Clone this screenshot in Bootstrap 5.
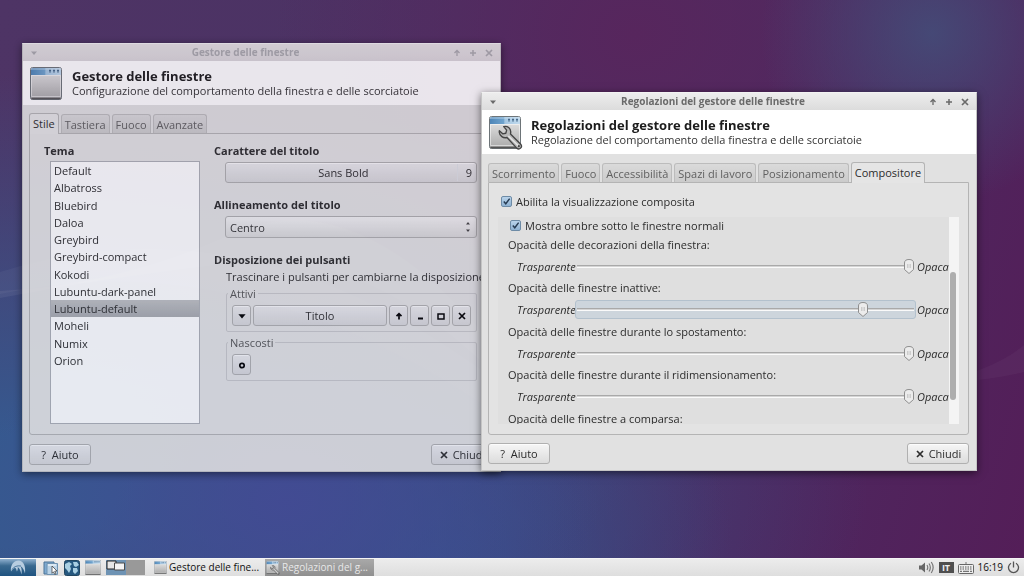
<!DOCTYPE html>
<html lang="it">
<head>
<meta charset="utf-8">
<meta name="viewport" content="width=device-width, initial-scale=1">
<title>Gestore delle finestre</title>
<link href="https://cdn.jsdelivr.net/npm/bootstrap@5.3.0/dist/css/bootstrap.min.css" rel="stylesheet">
<style>
  body { font-family: "Open Sans", "Noto Sans", sans-serif; font-size: 11px; line-height: 17px; color: #2c2c2c; }
  svg { display: block; flex: none; }

  /* Desktop */
  .desktop {
    background:
      radial-gradient(circle at 91% 6%, rgba(68,76,120,.9), rgba(68,76,120,0) 16%),
      radial-gradient(ellipse at 28% 90%, rgba(67,74,148,.9), rgba(67,74,148,0) 30%),
      radial-gradient(ellipse at 0% 88%, #36598f 8%, rgba(54,89,143,0) 60%),
      radial-gradient(ellipse at 62% 6%, #57265d, rgba(87,38,93,0) 40%),
      radial-gradient(ellipse at 42% 100%, rgba(56,70,132,.95), rgba(56,70,132,0) 36%),
      linear-gradient(105deg, #4e3465 0%, #4b3264 40%, #4d2860 75%, #541e58 100%);
  }
  .ray { position: absolute; inset: 0; width: 100%; height: 100%; }

  /* Windows */
  .win { position: absolute; background: #e1e1e1; border: 1px solid #c4c4c4; border-top-color: #f2f2f2; box-shadow: 0 2px 8px rgba(0,0,0,.55); }
  .win-manager { left: 22px; top: 43px; width: 479px; opacity: .88; }
  .win-tweaks { left: 481px; top: 92px; width: 496px; }
  .win-title { height: 17px; padding: 0 6px; background: linear-gradient(#ededed, #dcdcdc); color: #6a6a6a; font-size: 10px; font-weight: 700; }
  .win-manager .win-title { color: #a9a9ad; background: linear-gradient(#e4e1e2, #dad7da); }
  .win-title button { border: 0; background: none; color: inherit; padding: 0; width: 10px; height: 10px; }
  .win-title .controls { gap: 6px; }
  .win-banner { height: 44px; background: #fff; padding: 0 6px; color: #333; }
  .win-banner h1 { font-size: 13px; line-height: 15px; font-weight: 700; margin: 0; color: #1c1c1c; }
  .win-banner p { line-height: 14px; margin: 0; }
  .win-body { padding: 8px 7px 6px 6px; }

  .win .nav-tabs { border: 0; gap: 2px; height: 20px; padding-right: 1px; }
  .win .nav-link { font-size: 11px; line-height: 17px; padding: 1px 3px; color: #606060; border: 1px solid #bcbcbc; border-bottom: 0; border-radius: 3px 3px 0 0; background: linear-gradient(#dadada, #cbcbcb); margin: 0; height: 19px; }
  .win .nav-link.active { background: #e5e5e5; color: #2c2c2c; height: 21px; margin-bottom: -1px; border-color: #b4b4b4; position: relative; z-index: 1; }
  .win-page { background: #e3e3e3; border: 1px solid #b4b4b4; border-radius: 0 0 3px 3px; }

  .caption { font-size: 11px; line-height: 17px; font-weight: 700; margin: 0; }
  .gtk-btn { font-size: 11px; line-height: 17px; color: #2c2c2c; background: linear-gradient(#f6f6f6, #dcdcdc); border: 1px solid #b0b0b0; border-radius: 3px; padding: 0 4px; height: 21px; box-shadow: inset 0 1px 0 rgba(255,255,255,.7); }
  .gtk-btn:hover { background: #eee; border-color: #999; color: #333; }
  .dlg-btn { width: 62px; }
  .sq-btn { width: 19px; height: 21px; padding: 0; color: #000; }
  .win-manager .gtk-btn { background: linear-gradient(#eaeaec, #d8d8da); }

  .manager-page { padding: 8px 15px 10px 14px; gap: 14px; }
  .theme-col { width: 156px; }
  .theme-list { height: 263px; margin: 2px 0 0 6px; background: #fff; border: 1px solid #aeb0b6; border-radius: 0; }
  .theme-list ul { display: grid; grid-auto-rows: 1fr; height: 207px; margin: 0; padding: 0; list-style: none; }
  .theme-list li { padding: 0 3px; line-height: 17px; }
  .theme-list li[aria-selected=true] { background: linear-gradient(#bfc0c2, #a9abaf); }
  .options { min-width: 0; }
  .indent { padding: 3px 0 13px 11px; }
  .gtk-select { appearance: none; font-size: 11px; line-height: 17px; height: 22px; padding: 0 4px; color: #333; border: 1px solid #b0b0b0; border-radius: 3px;
    background: url("data:image/svg+xml,%3Csvg xmlns='http://www.w3.org/2000/svg' width='6' height='12'%3E%3Cpath d='M1 3.500L3 1l2 2.500zM1 8.500L3 11l2-2.500z' fill='%23444'/%3E%3C/svg%3E") right 5px center no-repeat, linear-gradient(#f2f2f2, #dadada); }
  .frame { border: 1px solid #c8c8ca; border-radius: 2px; padding: 3px 5px 5px 5px; margin: 0 0 2px; }
  .frame legend { float: none; width: auto; font-size: 11px; line-height: 17px; padding: 0 2px; margin: 0 0 0 -4px; color: #555; }

  /* Compositor page */
  .tweaks-page { padding: 8px 9px 10px; }
  .check-row { height: 20px; margin-bottom: 6px; padding-left: 3px; }
  .scroll-pane .check-row { height: 16px; margin-bottom: 2px; padding-left: 2px; }
  .gtk-check { appearance: none; width: 11px; height: 11px; margin: 0; border: 1px solid #6d8ba6; border-radius: 2px; flex: none;
    background: url("data:image/svg+xml,%3Csvg xmlns='http://www.w3.org/2000/svg' viewBox='0 0 10 10'%3E%3Cpath d='M2 5l2.200 2.500L8.500 1.800' fill='none' stroke='%23263b52' stroke-width='1.600'/%3E%3C/svg%3E") center/9px no-repeat, linear-gradient(#b9d3ea, #8fb2d3); }
  .scroll-pane { height: 207px; background: #dfdfdf; overflow: hidden; padding-left: 10px; }
  .sliders { display: grid; grid-auto-rows: 1fr; height: 217px; }
  .sliders .name { line-height: 20px; display: block; }
  .slider-row { height: 23px; }
  .slider-row i { flex: none; width: 67px; padding-left: 9px; }
  .slider-row i.end { width: 33px; padding-left: 1px; }
  .gtk-range { appearance: none; flex: 1 1 0; min-width: 0; height: 19px; margin: 0; padding: 0 1px; border: 1px solid transparent; border-radius: 3px; background: none; }
  .gtk-range.focused { background: #cdd5dc; border-color: #b3c1cd; }
  .gtk-range::-webkit-slider-runnable-track { height: 3px; border-top: 1px solid #a9a9a9; border-bottom: 1px solid #fafafa; background: #d4d4d4; }
  .gtk-range::-webkit-slider-thumb { appearance: none; width: 10px; height: 15px; margin-top: -7px; border: 0;
    background: url("data:image/svg+xml,%3Csvg xmlns='http://www.w3.org/2000/svg' width='10' height='15'%3E%3Cpath d='M.5 4Q.5.5 5 .5T9.500 4v6.500L5 14.500.5 10.500z' fill='%23ececec' stroke='%238e8e8e'/%3E%3Cpath d='M3.500 5v4M5 5v4M6.500 5v4' stroke='%23c4c4c4' stroke-width='.8'/%3E%3C/svg%3E") no-repeat; }
  .scroll-track { width: 10px; background: #f4f4f4; padding: 55px 3px 24px 1px; }
  .scroll-thumb { flex: 1; background: #aeaeae; border-radius: 3px; }

  .dlg-foot { margin-top: 9px; }
  .win-tweaks .dlg-foot { margin-top: 8px; }

  /* Panel */
  .panel { background: linear-gradient(#ececec, #dedede); height: 18px; border-top: 1px solid #f4f4f4; }
  .panel button { border: 0; background: none; padding: 0; font-size: 10px; line-height: 17px; color: #111; }
  .panel .start { width: 36px; margin-right: 7px; background: linear-gradient(#8fb0cf, #39698f 40%, #1f5380); }
  .panel .launch { margin-right: 5px; }
  .panel .pager { margin-right: 8px; }
  .panel .task { width: 109px; padding-left: 1px; gap: 2px; margin-right: 3px; white-space: nowrap; font-weight: 500; }
  .panel .task.active { background: linear-gradient(#a9a9a9, #8f8f8f); color: #e8e8e8; }
  .tray { gap: 4px; padding-right: 4px; color: #555; }
  .tray .lang { background: #4f4f4f; color: #eee; font-size: 9px; line-height: 11px; font-weight: 700; width: 15px; }
  .tray time { color: #111; font-weight: 500; font-size: 10px; }
</style>
</head>
<body class="vh-100 d-flex flex-column overflow-hidden">

<svg width="0" height="0" class="position-absolute" aria-hidden="true">
  <defs>
    <linearGradient id="gBody" x2="0" y2="1"><stop offset="0" stop-color="#ececec"/><stop offset="1" stop-color="#a8a8a8"/></linearGradient>
    <linearGradient id="gBar"><stop offset="0" stop-color="#4e86b8"/><stop offset=".45" stop-color="#6fa3cd"/><stop offset=".5" stop-color="#a3c6e2"/><stop offset="1" stop-color="#c2dbee"/></linearGradient>
    <symbol id="window" viewBox="0 0 32 33">
      <rect x=".5" y=".5" width="31" height="32" rx="2" fill="url(#gBody)" stroke="#6d7478"/>
      <path d="M1 8V2.500Q1 1 2.500 1h27Q31 1 31 2.500V8z" fill="url(#gBar)"/>
      <path d="M1 2h30" stroke="#d4e6f4" opacity=".7"/>
      <path d="M19 3.500h2M23 3.500h2M27 3.500h2M19.500 5h1M23.500 5h1M27.500 5h1" stroke="#47698a" stroke-width="1.500"/>
      <path d="M1.500 31.500h29" stroke="#555" stroke-width="1.600"/>
      <path d="M1.500 8.500h29v21h-29z" fill="none" stroke="#fff" opacity=".5"/>
    </symbol>
    <symbol id="wrench" viewBox="0 0 24 24">
      <path d="M5.500 1.500C9 .5 12.500 3 12.200 7l-.2 1.600 9.800 9.900c1 1.200.9 2.700-.1 3.700s-2.600 1-3.700 0L8.600 12C5 13 1.500 10.500 1.200 7l.1-1.500L4.500 8.500l3-.6.8-3z" fill="#b9b9b9" stroke="#444" stroke-width="1.300" stroke-linejoin="round"/>
      <path d="M10 10.500l9.500 9.500" stroke="#e6e6e6" stroke-width="1.300"/>
      <circle cx="20" cy="20.300" r="1" fill="#444"/>
    </symbol>
    <symbol id="menuMark" viewBox="0 0 10 10"><path d="M2 3.500h6L5 7z" fill="currentColor"/></symbol>
    <symbol id="up" viewBox="0 0 10 10"><path d="M5 8V3M2.500 5L5 2.500 7.500 5" fill="none" stroke="currentColor" stroke-width="1.300"/></symbol>
    <symbol id="plus" viewBox="0 0 10 10"><path d="M5 2v6M2 5h6" stroke="currentColor" stroke-width="1.500"/></symbol>
    <symbol id="cross" viewBox="0 0 10 10"><path d="M2 2l6 6M8 2L2 8" stroke="currentColor" stroke-width="1.700"/></symbol>
  </defs>
</svg>

<main class="desktop flex-grow-1 position-relative overflow-hidden">
  <svg class="ray" viewBox="0 0 1024 558" preserveAspectRatio="none" aria-hidden="true">
    <path d="M0 291Q120 285 230 235 350 180 480 330L480 360Q360 250 240 262 120 275 0 298z" fill="#fff" opacity=".06"/>
    <path d="M0 272Q260 190 520 400L520 430Q260 240 0 294z" fill="#fff" opacity=".04"/>
    <path d="M960 382Q1000 378 1024 372V345Q1000 365 960 376z" fill="#fff" opacity=".03"/>
  </svg>

  <section class="win win-manager" aria-labelledby="t1">
    <header class="win-title d-flex align-items-center">
      <button type="button" aria-label="Menu"><svg width="10" height="10"><use href="#menuMark"/></svg></button>
      <div id="t1" class="flex-grow-1 text-center">Gestore delle finestre</div>
      <div class="controls d-flex">
        <button type="button" aria-label="Arrotola"><svg width="10" height="10"><use href="#up"/></svg></button>
        <button type="button" aria-label="Massimizza"><svg width="10" height="10"><use href="#plus"/></svg></button>
        <button type="button" aria-label="Chiudi finestra"><svg width="10" height="10"><use href="#cross"/></svg></button>
      </div>
    </header>
    <div class="win-banner d-flex align-items-center">
      <svg width="35" height="35" class="me-2"><use href="#window" x="1" y="1" width="32" height="33"/></svg>
      <div><h1>Gestore delle finestre</h1><p>Configurazione del comportamento della finestra e delle scorciatoie</p></div>
    </div>
    <div class="win-body">
      <ul class="nav nav-tabs flex-nowrap align-items-end">
        <li class="nav-item"><a class="nav-link active" href="#stile">Stile</a></li>
        <li class="nav-item"><a class="nav-link" href="#tastiera">Tastiera</a></li>
        <li class="nav-item"><a class="nav-link" href="#fuoco">Fuoco</a></li>
        <li class="nav-item"><a class="nav-link" href="#avanzate">Avanzate</a></li>
      </ul>
      <div class="win-page manager-page d-flex">
        <div class="theme-col flex-shrink-0">
          <h2 class="caption" id="tema">Tema</h2>
          <div class="theme-list">
            <ul role="listbox" aria-labelledby="tema">
              <li role="option">Default</li>
              <li role="option">Albatross</li>
              <li role="option">Bluebird</li>
              <li role="option">Daloa</li>
              <li role="option">Greybird</li>
              <li role="option">Greybird-compact</li>
              <li role="option">Kokodi</li>
              <li role="option">Lubuntu-dark-panel</li>
              <li role="option" aria-selected="true">Lubuntu-default</li>
              <li role="option">Moheli</li>
              <li role="option">Numix</li>
              <li role="option">Orion</li>
            </ul>
          </div>
        </div>
        <div class="options flex-grow-1">
          <h2 class="caption">Carattere del titolo</h2>
          <div class="indent">
            <button type="button" class="btn gtk-btn w-100 d-flex align-items-center">
              <span class="flex-grow-1">Sans Bold</span><span class="border-start ps-2">9</span>
            </button>
          </div>
          <label class="caption d-block" for="align">Allineamento del titolo</label>
          <div class="indent">
            <select id="align" class="gtk-select w-100 d-block"><option>Centro</option></select>
          </div>
          <h2 class="caption">Disposizione dei pulsanti</h2>
          <div class="ps-2 ms-1">
            <p class="m-0 text-nowrap">Trascinare i pulsanti per cambiarne la disposizione</p>
            <fieldset class="frame">
              <legend>Attivi</legend>
              <div class="d-flex" style="gap: 2px">
                <button type="button" class="btn gtk-btn sq-btn" aria-label="Menu"><svg class="m-auto" width="12" height="12"><use href="#menuMark"/></svg></button>
                <button type="button" class="btn gtk-btn flex-grow-1">Titolo</button>
                <button type="button" class="btn gtk-btn sq-btn" aria-label="Arrotola"><svg class="m-auto" width="10" height="10" viewBox="0 0 10 10"><path d="M5 8.500V3M2.500 5.200L5 2.700 7.500 5.200" fill="none" stroke="currentColor" stroke-width="1.700"/></svg></button>
                <button type="button" class="btn gtk-btn sq-btn" aria-label="Minimizza"><svg class="m-auto" width="10" height="10"><path d="M3 7.500h5" stroke="currentColor" stroke-width="2"/></svg></button>
                <button type="button" class="btn gtk-btn sq-btn" aria-label="Massimizza"><svg class="m-auto" width="10" height="10"><path d="M2 3h6v5H2z" fill="none" stroke="currentColor" stroke-width="1.500"/></svg></button>
                <button type="button" class="btn gtk-btn sq-btn" aria-label="Chiudi"><svg class="m-auto" width="10" height="10"><use href="#cross"/></svg></button>
              </div>
            </fieldset>
            <fieldset class="frame">
              <legend>Nascosti</legend>
              <button type="button" class="btn gtk-btn sq-btn d-block" aria-label="Appiccica"><svg class="m-auto" width="10" height="10"><circle cx="5" cy="5.500" r="2.200" fill="none" stroke="currentColor" stroke-width="1.700"/></svg></button>
            </fieldset>
          </div>
        </div>
      </div>
      <div class="dlg-foot d-flex justify-content-between">
        <button type="button" class="btn gtk-btn dlg-btn">? &nbsp;Aiuto</button>
        <button type="button" class="btn gtk-btn dlg-btn d-flex align-items-center justify-content-center gap-1"><svg width="10" height="10"><use href="#cross"/></svg>Chiudi</button>
      </div>
    </div>
  </section>

  <section class="win win-tweaks" aria-labelledby="t2">
    <header class="win-title d-flex align-items-center">
      <button type="button" aria-label="Menu"><svg width="10" height="10"><use href="#menuMark"/></svg></button>
      <div id="t2" class="flex-grow-1 text-center">Regolazioni del gestore delle finestre</div>
      <div class="controls d-flex">
        <button type="button" aria-label="Arrotola"><svg width="10" height="10"><use href="#up"/></svg></button>
        <button type="button" aria-label="Massimizza"><svg width="10" height="10"><use href="#plus"/></svg></button>
        <button type="button" aria-label="Chiudi finestra"><svg width="10" height="10"><use href="#cross"/></svg></button>
      </div>
    </header>
    <div class="win-banner d-flex align-items-center">
      <svg width="35" height="35" class="me-2"><use href="#window" x="1" y="1" width="32" height="33"/><use href="#wrench" x="10" y="10" width="25" height="25"/></svg>
      <div><h1>Regolazioni del gestore delle finestre</h1><p>Regolazione del comportamento della finestra e delle scorciatoie</p></div>
    </div>
    <div class="win-body">
      <ul class="nav nav-tabs flex-nowrap align-items-end">
        <li class="nav-item"><a class="nav-link" href="#scorrimento">Scorrimento</a></li>
        <li class="nav-item"><a class="nav-link" href="#fuoco2">Fuoco</a></li>
        <li class="nav-item"><a class="nav-link" href="#accessibilita">Accessibilità</a></li>
        <li class="nav-item"><a class="nav-link text-nowrap" href="#spazi">Spazi di lavoro</a></li>
        <li class="nav-item"><a class="nav-link" href="#posizionamento">Posizionamento</a></li>
        <li class="nav-item"><a class="nav-link active" href="#compositore">Compositore</a></li>
      </ul>
      <div class="win-page tweaks-page">
        <label class="check-row d-flex align-items-center gap-1"><input type="checkbox" class="gtk-check" checked>Abilita la visualizzazione composita</label>
        <div class="d-flex">
          <div class="scroll-pane flex-grow-1">
            <label class="check-row d-flex align-items-center gap-1"><input type="checkbox" class="gtk-check" checked>Mostra ombre sotto le finestre normali</label>
            <div class="sliders">
              <div><label class="name" for="r1">Opacità delle decorazioni della finestra:</label>
                <div class="slider-row d-flex align-items-center"><i>Trasparente</i><input id="r1" class="gtk-range" type="range" value="100"><i class="end">Opaca</i></div></div>
              <div><label class="name" for="r2">Opacità delle finestre inattive:</label>
                <div class="slider-row d-flex align-items-center"><i>Trasparente</i><input id="r2" class="gtk-range focused" type="range" value="86"><i class="end">Opaca</i></div></div>
              <div><label class="name" for="r3">Opacità delle finestre durante lo spostamento:</label>
                <div class="slider-row d-flex align-items-center"><i>Trasparente</i><input id="r3" class="gtk-range" type="range" value="100"><i class="end">Opaca</i></div></div>
              <div><label class="name" for="r4">Opacità delle finestre durante il ridimensionamento:</label>
                <div class="slider-row d-flex align-items-center"><i>Trasparente</i><input id="r4" class="gtk-range" type="range" value="100"><i class="end">Opaca</i></div></div>
              <div><span class="name">Opacità delle finestre a comparsa:</span></div>
            </div>
          </div>
          <div class="scroll-track d-flex"><div class="scroll-thumb"></div></div>
        </div>
      </div>
      <div class="dlg-foot d-flex justify-content-between">
        <button type="button" class="btn gtk-btn dlg-btn">? &nbsp;Aiuto</button>
        <button type="button" class="btn gtk-btn dlg-btn d-flex align-items-center justify-content-center gap-1"><svg width="10" height="10"><use href="#cross"/></svg>Chiudi</button>
      </div>
    </div>
  </section>
</main>

<footer class="panel d-flex align-items-center flex-shrink-0">
  <button type="button" class="start h-100 flex-shrink-0" aria-label="Menu principale">
    <svg class="m-auto" width="18" height="17" viewBox="0 0 18 17"><path d="M2 12.500C1 6 5 1.500 9.500 1.500c4.500 0 7.500 5 6.500 13-.8-3.500-2-5.800-4.300-7.300 1.200 3 1.300 5.500.6 8.300-.5-3.500-1.600-6-3.600-7.500.3 1.500 0 3-.8 4.500C7.500 10.500 7 9.500 6 8.800 4.500 9.500 3 10.800 2 12.500z" fill="#b7cde0"/><path d="M3 10.500Q6 6 12 7" fill="none" stroke="#2c5f8a" stroke-width=".8"/></svg>
  </button>
  <button type="button" class="launch" aria-label="Gestore file"><svg width="16" height="16"><path d="M1 2h10v12H1z" fill="#7eaad0" stroke="#4a7396"/><path d="M4 3.500h10.500v11H4z" fill="#b9d2e6" stroke="#6f93b2"/><path d="M5 5h8" stroke="#fff"/><path d="M9 6l5 5-2.300.2 1.300 2.500-1.300.6-1.200-2.500L9 13.300z" fill="#fff" stroke="#333" stroke-width=".7"/></svg></button>
  <button type="button" class="launch" aria-label="Browser web"><svg width="16" height="16"><rect x=".5" y=".5" width="15" height="15" rx="2" fill="#26587f" stroke="#234761"/><path d="M1 4l4-2 3 2-2 2 1 3-2 4-2-3-2-2zM9 2l4 0 2 3-3 2-2-1zM9 8l4 0 1 3-3 3-2-2z" fill="#a9cfe2"/></svg></button>
  <button type="button" class="launch" aria-label="Mostra desktop"><svg width="16" height="15" viewBox="0 0 32 33" preserveAspectRatio="none"><use href="#window" width="32" height="33"/></svg></button>
  <svg class="pager" width="39" height="15"><path d="M0 0h20v15H0z" fill="#6e93b4"/><path d="M20 0h19v15H20z" fill="#999"/><path d="M1 1h9v8H1z" fill="#e6e6e6" stroke="#222"/><path d="M8.500 3h10v7h-10z" fill="#f4f4f4" stroke="#4d4d4d"/></svg>
  <button type="button" class="task h-100 d-flex align-items-center flex-shrink-0"><svg width="13" height="13"><use href="#window"/></svg>Gestore delle fine...</button>
  <button type="button" class="task active h-100 d-flex align-items-center flex-shrink-0"><svg width="14" height="14"><use href="#window" width="13" height="13"/><use href="#wrench" x="4" y="4" width="10" height="10"/></svg>Regolazioni del g...</button>
  <div class="tray d-flex align-items-center ms-auto">
    <svg width="16" height="13" viewBox="0 0 16 13"><path d="M0 4.500h2.500L6 1.500v10L2.500 8.500H0z" fill="#666"/><path d="M8 4q1.500 2.500 0 5M10 2.500q2.700 4 0 8M12.300 1q3.700 5.500 0 11" fill="none" stroke="#777" stroke-width="1.200"/></svg>
    <span class="lang text-center">IT</span>
    <svg width="16" height="12" viewBox="0 0 16 12"><path d="M8 3V0" stroke="#777"/><rect x=".5" y="2.500" width="15" height="9" rx="1" fill="#eee" stroke="#666"/><path d="M2 5h12M2 7h12" stroke="#555" stroke-dasharray="1.500 1"/><path d="M2 9.300h2M5 9.300h6M12 9.300h2" stroke="#555"/></svg>
    <time>16:19</time>
    <svg width="13" height="13" viewBox="0 0 13 13"><path d="M4 2.200a5 5 0 1 0 5 0M6.500.5v6" fill="none" stroke="#555" stroke-width="1.300"/></svg>
  </div>
</footer>

<script src="https://cdn.jsdelivr.net/npm/bootstrap@5.3.0/dist/js/bootstrap.bundle.min.js"></script>
</body>
</html>
